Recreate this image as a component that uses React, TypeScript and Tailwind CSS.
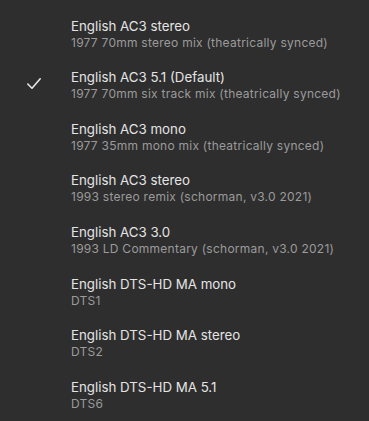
import React from "react";

const items = [
  { t: "English AC3 stereo", s: "1977 70mm stereo mix (theatrically synced)" },
  { t: "English AC3 5.1 (Default)", s: "1977 70mm six track mix (theatrically synced)", checked: true },
  { t: "English AC3 mono", s: "1977 35mm mono mix (theatrically synced)" },
  { t: "English AC3 stereo", s: "1993 stereo remix (schorman, v3.0 2021)" },
  { t: "English AC3 3.0", s: "1993 LD Commentary (schorman, v3.0 2021)" },
  { t: "English DTS-HD MA mono", s: "DTS1" },
  { t: "English DTS-HD MA stereo", s: "DTS2" },
  { t: "English DTS-HD MA 5.1", s: "DTS6" },
];

export default function App() {
  return (
    <div
      className="w-[369px] h-[421px] bg-[#2e2e2e] pt-[7px] overflow-hidden"
      style={{ fontFamily: "Inter, 'Noto Sans', sans-serif" }}
    >
      {items.map((it, i) => (
        <div key={i} className="h-[51.57px] flex items-center">
          <div className="w-[71px] flex justify-start pl-[26px]">
            {it.checked && (
              <svg width="16" height="13" viewBox="0 0 16 13" className="mt-[-1px]">
                <path d="M1.8 7 L6 11.2 L14.2 1.8" fill="none" stroke="#e6e6e6" strokeWidth="1.6" strokeLinecap="round" strokeLinejoin="round" />
              </svg>
            )}
          </div>
          <div className="flex flex-col">
            <div className="pt-[2px] text-[13.3px] leading-[18px] text-[#e4e4e4]">{it.t}</div>
            <div className="text-[12px] leading-[16px] tracking-[0.25px] text-[#9b9b9b]">{it.s}</div>
          </div>
        </div>
      ))}
    </div>
  );
}
